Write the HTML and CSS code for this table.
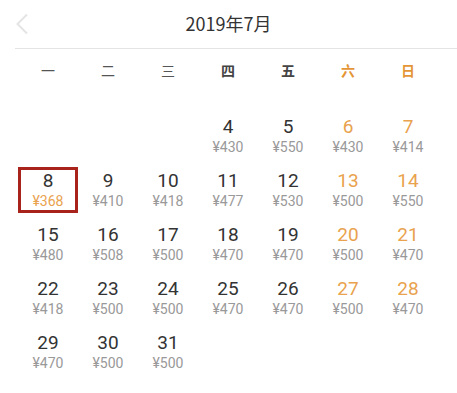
FILE: index.html
```html
<!DOCTYPE html>
<html lang="zh">
<head>
<meta charset="utf-8">
<link rel="stylesheet" href="styles.css">
</head>
<body>
<div class="cal">
  <div class="head">
    <span class="back"><svg width="14" height="22" viewBox="0 0 14 22"><path d="M12 1.5 L2.5 11 L12 20.5" fill="none" stroke="#e4e4e4" stroke-width="2"/></svg></span>
    <span class="title">2019年7月</span>
    <span></span>
  </div>
  <div class="week">
    <span class="lt">一</span><span class="lt">二</span><span class="lt">三</span><span>四</span><span>五</span><span class="we">六</span><span class="we">日</span>
  </div>
  <div class="days">
    <div></div><div></div><div></div>
    <div class="d"><b>4</b><i>¥430</i></div>
    <div class="d"><b>5</b><i>¥550</i></div>
    <div class="d w"><b>6</b><i>¥430</i></div>
    <div class="d w"><b>7</b><i>¥414</i></div>
    <div class="d sel"><b>8</b><i>¥368</i></div>
    <div class="d"><b>9</b><i>¥410</i></div>
    <div class="d"><b>10</b><i>¥418</i></div>
    <div class="d"><b>11</b><i>¥477</i></div>
    <div class="d"><b>12</b><i>¥530</i></div>
    <div class="d w"><b>13</b><i>¥500</i></div>
    <div class="d w"><b>14</b><i>¥550</i></div>
    <div class="d"><b>15</b><i>¥480</i></div>
    <div class="d"><b>16</b><i>¥508</i></div>
    <div class="d"><b>17</b><i>¥500</i></div>
    <div class="d"><b>18</b><i>¥470</i></div>
    <div class="d"><b>19</b><i>¥470</i></div>
    <div class="d w"><b>20</b><i>¥500</i></div>
    <div class="d w"><b>21</b><i>¥470</i></div>
    <div class="d"><b>22</b><i>¥418</i></div>
    <div class="d"><b>23</b><i>¥500</i></div>
    <div class="d"><b>24</b><i>¥500</i></div>
    <div class="d"><b>25</b><i>¥470</i></div>
    <div class="d"><b>26</b><i>¥470</i></div>
    <div class="d w"><b>27</b><i>¥500</i></div>
    <div class="d w"><b>28</b><i>¥470</i></div>
    <div class="d"><b>29</b><i>¥470</i></div>
    <div class="d"><b>30</b><i>¥500</i></div>
    <div class="d"><b>31</b><i>¥500</i></div>
  </div>
</div>
</body>
</html>
```
FILE: styles.css
```css
html, body { margin: 0; padding: 0; background: #fff; }
body { font-family: Roboto, "Noto Sans CJK SC", sans-serif; color: #333; }
.cal { width: 457px; }
.head {
  height: 48px;
  display: grid;
  grid-template-columns: 1fr auto 1fr;
  align-items: center;
  border-bottom: 1px solid #e4e4e4;
  margin-left: 15px;
}
.back { display: flex; align-items: center; height: 22px; margin-top: -1px; }
.title { font-family: "Noto Sans CJK SC", sans-serif; font-size: 18px; color: #333; margin-left: -15px; margin-top: -2px; }
.week {
  display: grid;
  grid-template-columns: repeat(7, 60px);
  padding-left: 18px;
  height: 42px;
  align-items: center;
  font-family: "Noto Sans CJK SC", sans-serif;
  font-size: 14px;
  font-weight: 700;
  color: #444;
}
.week span { text-align: center; }
.week .lt { font-weight: 400; color: #555; }
.week .we { color: #e49536; }
.days {
  display: grid;
  grid-template-columns: repeat(7, 60px);
  grid-auto-rows: 46px;
  row-gap: 8px;
  padding-left: 18px;
  margin-top: 22px;
}
.d {
  display: flex;
  flex-direction: column;
  align-items: center;
  justify-content: center;
  box-sizing: border-box;
}
.d b { font-weight: 400; font-size: 19px; line-height: 23px; color: #333; }
.d i { font-style: normal; font-size: 14px; line-height: 19px; color: #999; }
.d.w b { color: #e9a24e; }
.sel { border: 3px solid #a8231c; }
.sel i { color: #e9a24e; }
```
